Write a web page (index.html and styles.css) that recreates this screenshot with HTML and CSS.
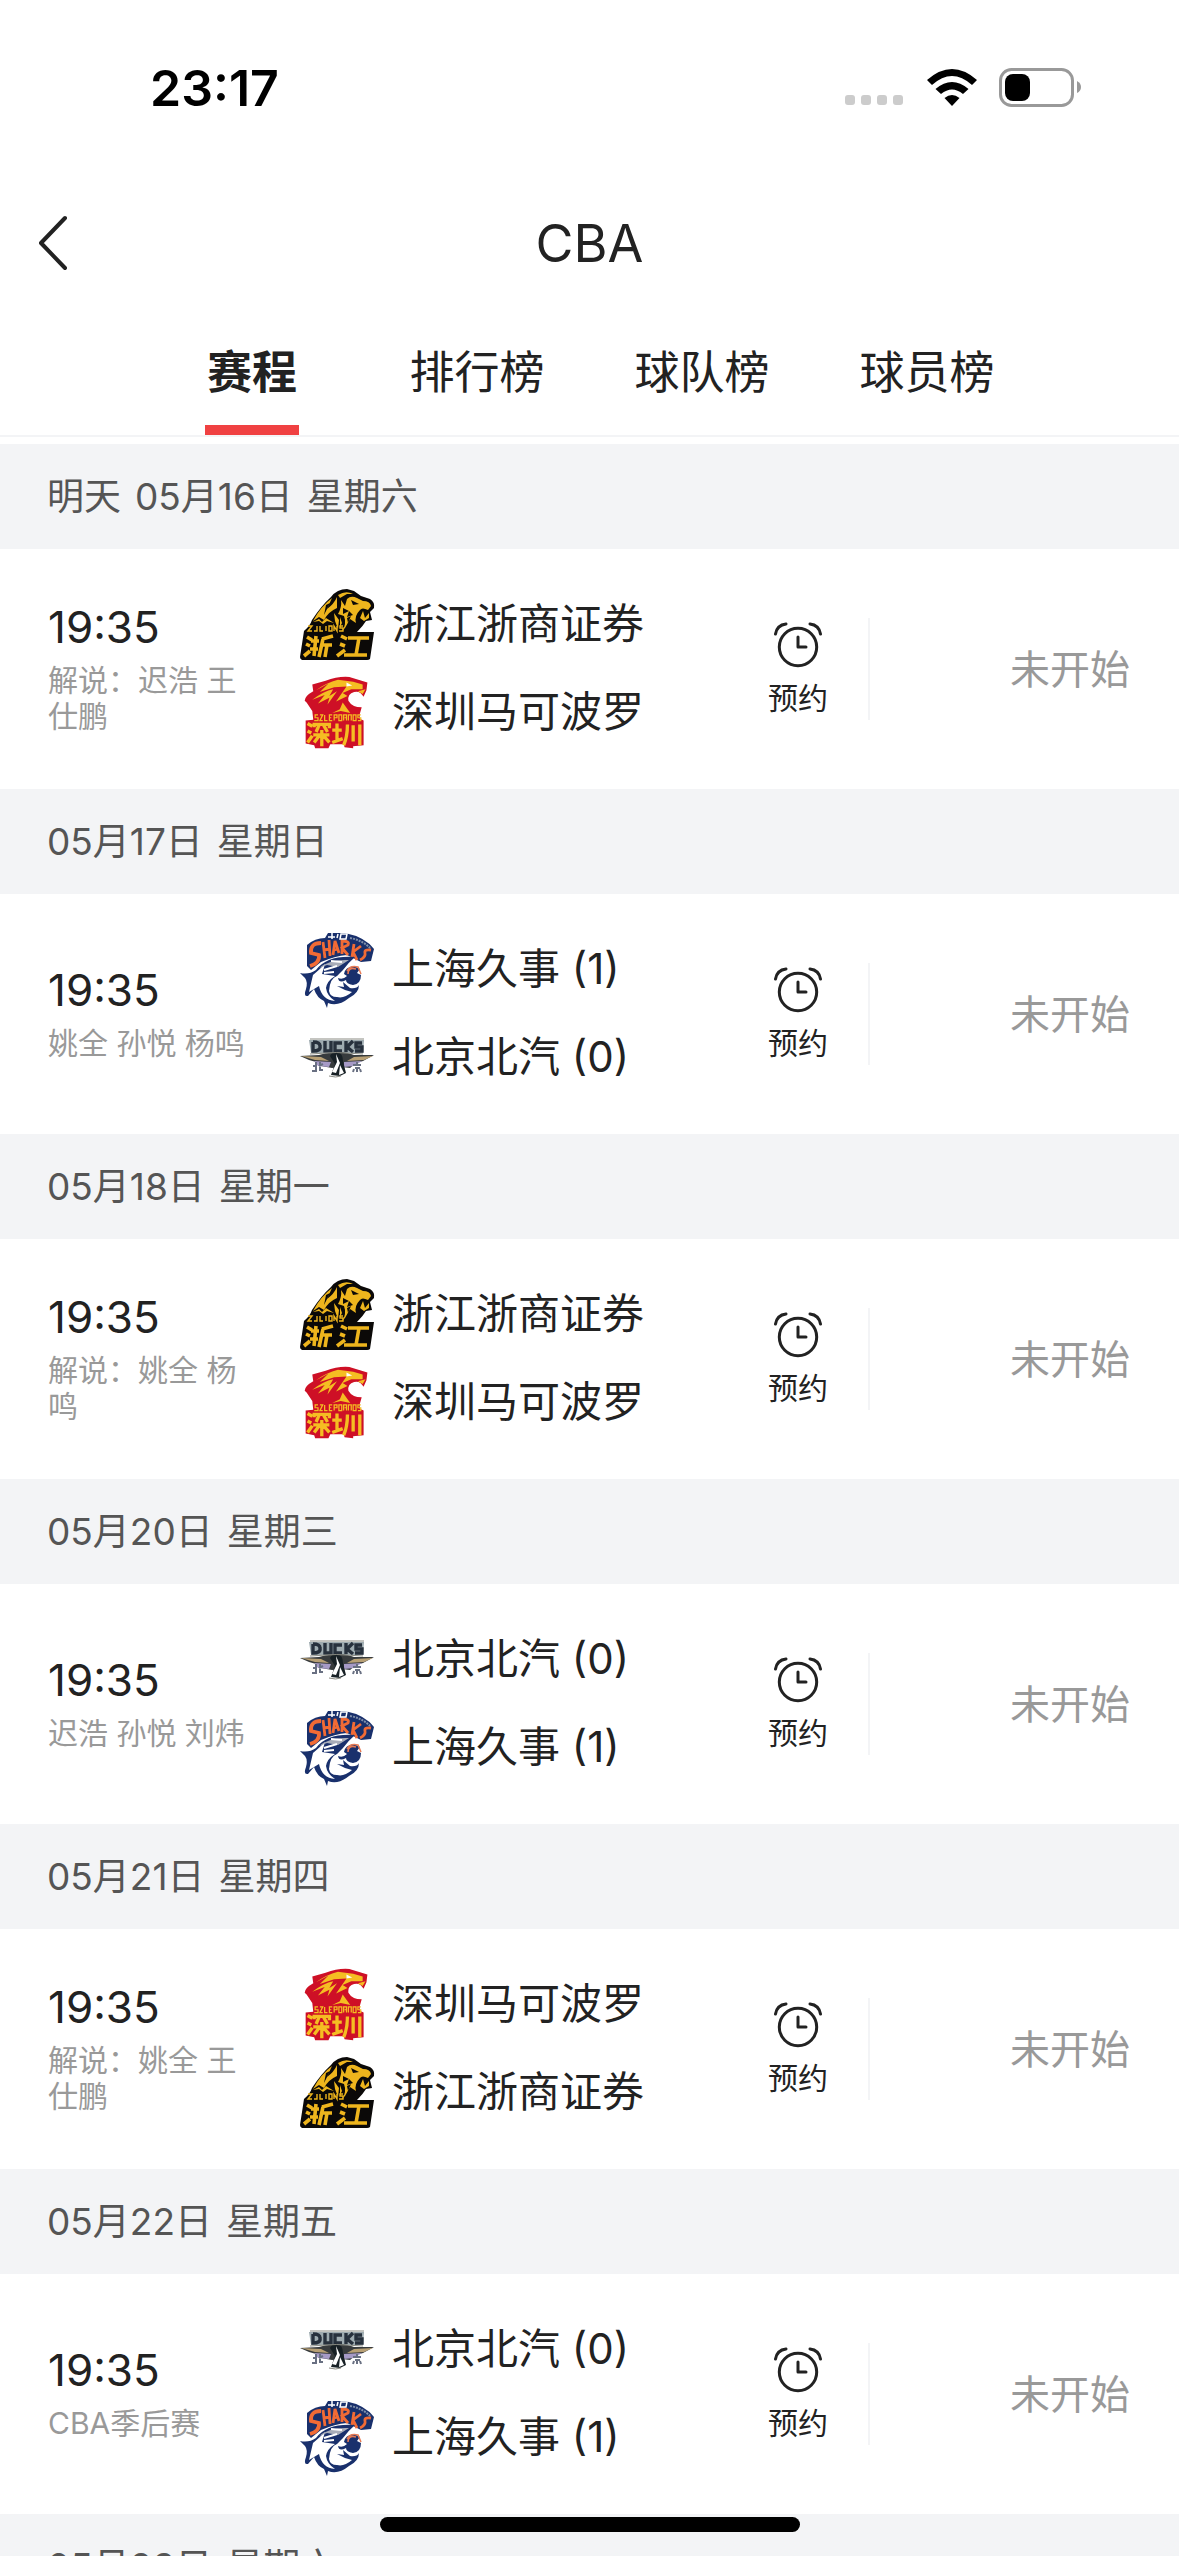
FILE: index.html
```
<!DOCTYPE html>
<html lang="zh-CN">
<head>
    <meta charset="UTF-8">
    <meta name="viewport" content="width=device-width, initial-scale=1.0">
    <title>CBA</title>
    <link rel="stylesheet" href="styles.css">
</head>
<body>
    <!-- 图标 -->
    <svg class="sprite" aria-hidden="true">
        <symbol id="clock" viewBox="0 0 48 46">
            <g fill="none" stroke="#222" stroke-width="3" stroke-linecap="round" stroke-linejoin="round">
                <circle cx="24" cy="25" r="18.700"/>
                <path d="M24 15v10h8M1.500 12Q3 3 12 2M46.500 12Q45 3 36 2"/>
            </g>
        </symbol>

        <symbol id="lions" viewBox="0 0 76 74">
            <path fill="#0b0908" d="M5 43Q11 38 13 32Q22 18 32 9Q38 1 48 1L55 3L62 8L71 11Q76 14 75 20L71 24L73 32L67 33Q64 38 58 44L75 44L71 71Q70 72 68 72L3 72Q1 71 1 69Z"/>
            <path fill="#eeb51d" d="M14 33Q22 18 33 10L28 21Q35 16 38 9L38 20Q29 24 25 32L20 29Z"/>
            <path fill="#eeb51d" d="M39 7Q47 2 54 6L48 6L41 10ZM48 11Q52 7 58 10L64 13Q71 13 72 18L69 22Q63 19 61 22Q55 28 57 35L51 31L46 40L43 43Q48 36 45 28L39 26Q43 19 42 12L46 18Z"/>
            <path fill="#0b0908" d="M52 12l8 4-6 1zM44 20l6 3-6 3zM50 23l4 4-6 2zM48 30l4-2-3 7zM31 15l-6 12 2-10z"/>
            <path fill="#eeb51d" d="M61 30l3-7 2 7 4-5 0 5-5 3zM14 34l6-3 3 3 4-4 8 5-7-2-4 3-4-3zM35 25l5 7-1 9-3-8zM41 29l2 6-2 4z"/>
            <g fill="none" stroke="#eeb51d" stroke-width="1.400">
                <path d="M9 38h4l-4 5h4M18 38v5h-3M21 38v5h3M27 38v5M30 38h3v5h-3zM35 43v-5l3 5v-5M44 38h-3v2h3v3h-4"/>
            </g>
            <g fill="none" stroke="#eeb51d" stroke-width="3.600">
                <path d="M8 49l5 3M7 56l4 2M5 68l6-5M17 48l-2 20M12 53h8M11 61h8M23 51l11-3M24 51l-4 18M24 57h9M28 57l-2 12M42 48l6 3M41 56l5 2M38 68l8-6M49 50h21M60 50l-3 17M45 67h23"/>
            </g>
        </symbol>

        <symbol id="leopards" viewBox="0 0 76 80">
            <path fill="#ce1026" d="M12 10L26 6Q39 1 51 2L70 8L69 16L66 23Q62 16 56 18Q49 20 50 27Q54 34 64 34L62 41L62 46L66 48L66 74L55 75L55 77L46 76L45 73L31 73L29 77L15 77L14 74L5 72L5 48L13 47L12 38L6 29L4 27Q4 22 13 17Z"/>
            <g fill="#f5bd22">
                <path d="M16 16Q27 8 39 5L55 7L65 10L65 15L53 15L44 19L49 22L37 28L48 12L35 13L20 18L29 9Z"/>
                <path d="M12 26Q24 17 34 15L30 22L38 17L28 31L30 24L18 30L25 21ZM44 29l8 11-10-2-9 2 8-4zM60 17l8-2-3 5z"/>
            </g>
            <path fill="#fff" d="M48 8l6 3-6 1z"/>
            <g fill="none" stroke="#f5bd22" stroke-width="1.300">
                <path d="M18 42h-3v3h3v3h-4M20 42h3l-3 6h3M25 42v6h3M33 42h-3v6h3M30 45h2M35 48v-6h3v3h-3M40 42h3v6h-3zM45 48v-6h3v6M46 45h2M50 48v-6h3v6M55 42v6h3v-6zM63 42h-3v3h3v3h-3"/>
            </g>
            <g fill="none" stroke="#f5bd22" stroke-width="3.500">
                <path d="M7 51l5 3M7 59l4 2M7 71l5-7M14 55v-3h16v4M19 53l-3 7M24 53l4 7M13 63h17M22 58v17M20 63l-6 8M23 63l7 8M33 58h10M38 51v18M33 71l11-4M49 52q0 13-4 22M55 53v17M62 52v22"/>
            </g>
        </symbol>

        <symbol id="sharks" viewBox="0 0 76 76">
            <path fill="#19306c" d="M8 13Q16 6 26 6L29 1L46 1Q66 5 75 17L72 29L62 30L48 23Q36 24 22 30L12 38L8 34Z"/>
            <g fill="none" stroke="#f26b35" stroke-width="3.800">
                <path d="M22 11Q11 11 12 21L20 23Q21 31 11 34"/>
                <path stroke-width="2.800" d="M24 10l2 16M30 8l1 16M25 18l6-1M34 23l2-14 4 12M35 18l4-1M43 22V9q8 0 6 4l-6 3 6 7M53 25l2-13M62 14l-8 6 4 8M72 18q-7-1-6 3t-5 7"/>
            </g>
            <path fill="none" stroke="#fff" stroke-width="1.500" d="M29 5h7M33 1v6M39 2l-1 4M42 2h6l-1 5h-6z"/>
            <path fill="none" stroke="#8190aa" stroke-width="2" stroke-dasharray="2 1" d="M51 6q12 2 20 10"/>
            <path fill="#19306c" d="M1 41Q10 43 17 38Q28 23 56 25Q50 30 44 38L38 44Q31 46 30 59Q31 65 38 65Q45 67 53 60L46 58L38 54L45 55L44 50L51 56Q58 57 60 53Q60 61 50 66Q39 75 29 71L28 76L25 69Q18 66 15 57L9 64Q4 65 7 57Q9 50 6 46Z"/>
            <path fill="#fff" d="M14 43Q20 38 26 32L23 42L36 44Q28 49 27 56Q28 64 36 69Q23 68 20 54L10 60Z"/>
            <path fill="#a8adb9" d="M20 36Q31 27 50 28L39 35L28 33Z"/>
            <path fill="none" stroke="#fff" stroke-width="2" d="M25 38l13-4M25 41l10-1M32 29l11 1"/>
            <path fill="#19306c" d="M45 42Q46 35 55 34L61 37L58 41L62 43Q62 52 54 53Q47 52 47 48Q40 52 39 46Q44 48 48 44Z"/>
            <path fill="none" stroke="#e77b55" stroke-width="1.500" d="M48 39q3-6 11-4l3 7M49 42q0-7 8-5"/>
        </symbol>

        <symbol id="ducks" viewBox="0 0 76 40">
            <path fill="#9eabb0" d="M10 2h55l-1 13H12z"/>
            <path fill="none" stroke="#27313d" stroke-width="3.400" d="M14 4v9q8 0 7-5 0-4-7-4M26 3v10h6V3M43 5h-7v8h7M47 3v11M54 3l-6 6 6 5M63 5h-6v4h6v4h-7"/>
            <path fill="#373b3d" d="M1 18L20 17Q29 14 37 15Q46 13 55 17L75 17L64 23L57 25L51 30L43 29L33 30L22 28L17 24L10 22Z"/>
            <path fill="#b8a075" d="M2 18l20 1 8 4-14-1zM74 18l-19 1-7 4 17-1z"/>
            <path fill="#a69ac6" d="M15 23l17 1-2 5-11-1zM45 24l18-1-8 5-10 1z"/>
            <path fill="#172025" d="M31 18q3-5 7-4 6 1 6 9l3 12-6 3-9-1 4-11z"/>
            <path fill="#fff" d="M37 16l4 9-4 10-4-1 5-10zM41 27l4 8-5 2z"/>
            <path fill="none" stroke="#697082" stroke-width="2" d="M14 28h3M17 24v8M13 33h5M21 24v8h3M20 28l4-2M54 27h8M58 24v3M56 30h5M58 30v4M55 31l-1 3M61 31l1 3"/>
            <path fill="none" stroke="#8a8b83" stroke-width="1" d="M11 1h54M11 16q26-3 53 0M30 38q7 2 12 0"/>
        </symbol>
    </svg>

    <header class="page-header">
        <div class="status-bar">
            <span class="status-time">23:17</span>
            <div class="status-icons">
                <svg class="dots" viewBox="0 0 60 12" fill="#ccc"><rect width="10" height="10" rx="3"/><rect x="16" width="10" height="10" rx="3"/><rect x="32" width="10" height="10" rx="3"/><rect x="48" width="10" height="10" rx="3"/></svg>
                <svg class="wifi" viewBox="0 0 50 38">
                    <path d="M0 11Q25-11 50 11L45 16Q25-2 5 16Z"/>
                    <path d="M8.500 20Q25 6 41.500 20L36 25Q25 16 14 25Z"/>
                    <path d="M17.500 29Q25 23 32.500 29L25 37Z"/>
                </svg>
                <svg class="battery" viewBox="0 0 82 40">
                    <rect x="1.500" y="1.500" width="72" height="36" rx="11" fill="none" stroke="#999" stroke-width="3"/>
                    <rect x="6" y="6" width="25" height="27" rx="8"/>
                    <path d="M78 13q4 2 4 6t-4 6z" fill="#999"/>
                </svg>
            </div>
        </div>
        <div class="nav-bar">
            <button class="back" aria-label="返回">
                <svg viewBox="0 0 32 56"><path d="M27 3L3 28L27 53" fill="none" stroke="#222" stroke-width="4" stroke-linecap="round" stroke-linejoin="round"/></svg>
            </button>
            <h1>CBA</h1>
        </div>
        <nav class="tabs">
            <a href="#" class="tab active">赛程</a>
            <a href="#" class="tab">排行榜</a>
            <a href="#" class="tab">球队榜</a>
            <a href="#" class="tab">球员榜</a>
        </nav>
    </header>

    <main class="schedule">
        <h2 class="date"><span>明天</span> <span>05月16日</span> <span>星期六</span></h2>
        <article class="match">
            <div class="info">
                <time>19:35</time>
                <p>解说：迟浩 王仕鹏</p>
            </div>
            <div class="teams">
                <div class="team"><svg><use href="#lions"/></svg><span>浙江浙商证券</span></div>
                <div class="team"><svg><use href="#leopards"/></svg><span>深圳马可波罗</span></div>
            </div>
            <button class="remind"><svg><use href="#clock"/></svg>预约</button>
            <div class="state">未开始</div>
        </article>

        <h2 class="date"><span>05月17日</span> <span>星期日</span></h2>
        <article class="match">
            <div class="info">
                <time>19:35</time>
                <p>姚全 孙悦 杨鸣</p>
            </div>
            <div class="teams">
                <div class="team"><svg><use href="#sharks"/></svg><span>上海久事 (1)</span></div>
                <div class="team"><svg><use href="#ducks"/></svg><span>北京北汽 (0)</span></div>
            </div>
            <button class="remind"><svg><use href="#clock"/></svg>预约</button>
            <div class="state">未开始</div>
        </article>

        <h2 class="date"><span>05月18日</span> <span>星期一</span></h2>
        <article class="match">
            <div class="info">
                <time>19:35</time>
                <p>解说：姚全 杨鸣</p>
            </div>
            <div class="teams">
                <div class="team"><svg><use href="#lions"/></svg><span>浙江浙商证券</span></div>
                <div class="team"><svg><use href="#leopards"/></svg><span>深圳马可波罗</span></div>
            </div>
            <button class="remind"><svg><use href="#clock"/></svg>预约</button>
            <div class="state">未开始</div>
        </article>

        <h2 class="date"><span>05月20日</span> <span>星期三</span></h2>
        <article class="match">
            <div class="info">
                <time>19:35</time>
                <p>迟浩 孙悦 刘炜</p>
            </div>
            <div class="teams">
                <div class="team"><svg><use href="#ducks"/></svg><span>北京北汽 (0)</span></div>
                <div class="team"><svg><use href="#sharks"/></svg><span>上海久事 (1)</span></div>
            </div>
            <button class="remind"><svg><use href="#clock"/></svg>预约</button>
            <div class="state">未开始</div>
        </article>

        <h2 class="date"><span>05月21日</span> <span>星期四</span></h2>
        <article class="match">
            <div class="info">
                <time>19:35</time>
                <p>解说：姚全 王仕鹏</p>
            </div>
            <div class="teams">
                <div class="team"><svg><use href="#leopards"/></svg><span>深圳马可波罗</span></div>
                <div class="team"><svg><use href="#lions"/></svg><span>浙江浙商证券</span></div>
            </div>
            <button class="remind"><svg><use href="#clock"/></svg>预约</button>
            <div class="state">未开始</div>
        </article>

        <h2 class="date"><span>05月22日</span> <span>星期五</span></h2>
        <article class="match">
            <div class="info">
                <time>19:35</time>
                <p>CBA季后赛</p>
            </div>
            <div class="teams">
                <div class="team"><svg><use href="#ducks"/></svg><span>北京北汽 (0)</span></div>
                <div class="team"><svg><use href="#sharks"/></svg><span>上海久事 (1)</span></div>
            </div>
            <button class="remind"><svg><use href="#clock"/></svg>预约</button>
            <div class="state">未开始</div>
        </article>

        <h2 class="date"><span>05月23日</span> <span>星期六</span></h2>
    </main>
    <div class="home-indicator"></div>
</body>
</html>
```
FILE: styles.css
```
* {
    box-sizing: border-box;
}
body {
    margin: 0;
    height: 100vh;
    overflow: hidden;
    display: flex;
    flex-direction: column;
    background-color: #fff;
    color: #222;
    font-family: Inter, "Noto Sans CJK SC", sans-serif;
}
button {
    padding: 0;
    border: none;
    background: none;
    color: inherit;
    font-family: inherit;
    cursor: pointer;
}
h1, h2, p {
    margin: 0;
    font-weight: 400;
}
.sprite {
    display: none;
}
.page-header {
    flex-shrink: 0;
    border-bottom: 2px solid #f3f4f6;
    margin-bottom: 7px;
}
.status-bar {
    display: flex;
    align-items: center;
    justify-content: space-between;
    height: 176px;
    padding: 0 98px 0 150px;
    color: #000;
}
.status-time {
    font-size: 50px;
    font-weight: 600;
}
.status-icons {
    display: flex;
    align-items: center;
    gap: 22px;
}
.dots {
    width: 60px;
    height: 12px;
    margin-top: 26px;
}
.wifi {
    width: 50px;
    height: 38px;
}
.battery {
    width: 82px;
    height: 40px;
}
.nav-bar {
    display: grid;
    grid-template-columns: 1fr auto 1fr;
    align-items: center;
    height: 134px;
    padding: 0 38px;
}
.nav-bar h1 {
    font-size: 52px;
}
.back {
    width: 32px;
    height: 56px;
}
.back svg {
    display: block;
    width: 100%;
    height: 100%;
}
.tabs {
    display: grid;
    grid-template-columns: repeat(4, 225px);
    justify-content: center;
    height: 125px;
}
.tab {
    justify-self: center;
    height: 125px;
    padding: 0 2px;
    line-height: 126px;
    font-size: 45px;
    color: #222;
    text-decoration: none;
}
.tab.active {
    font-weight: 700;
    border-bottom: 10px solid #f04142;
}
.schedule {
    flex: 1;
    min-height: 0;
    overflow: hidden;
}
.date {
    display: flex;
    gap: 14px;
    height: 105px;
    padding: 0 47px;
    background-color: #f3f4f6;
    color: #555;
    font-size: 37px;
    line-height: 106px;
}
.match {
    display: grid;
    grid-template-columns: 203px 381px 142px 1fr;
    column-gap: 48px;
    align-items: center;
    height: 240px;
    padding: 0 49px 0 48px;
}
.info {
    padding-bottom: 4px;
}
.info time {
    display: block;
    margin-bottom: 8px;
    font-size: 44px;
    line-height: 54px;
}
.info p {
    color: #999;
    font-size: 30px;
    line-height: 36px;
}
.teams {
    display: grid;
    grid-template-rows: 88px 88px;
}
.team {
    display: flex;
    align-items: center;
    gap: 17px;
    font-size: 42px;
    white-space: nowrap;
}
.team svg {
    flex-shrink: 0;
    width: 76px;
    height: 76px;
}
.team span {
    padding-bottom: 10px;
}
.remind {
    display: flex;
    flex-direction: column;
    align-items: center;
    justify-content: center;
    gap: 8px;
    height: 102px;
    padding-top: 4px;
    border-right: 2px solid #f3f4f6;
    font-size: 30px;
    line-height: 44px;
}
.remind svg {
    width: 48px;
    height: 46px;
}
.state {
    padding-bottom: 4px;
    color: #999;
    font-size: 40px;
    text-align: right;
}
.home-indicator {
    position: fixed;
    bottom: 24px;
    left: 50%;
    width: 420px;
    height: 15px;
    margin-left: -210px;
    border-radius: 8px;
    background-color: #000;
}
```
